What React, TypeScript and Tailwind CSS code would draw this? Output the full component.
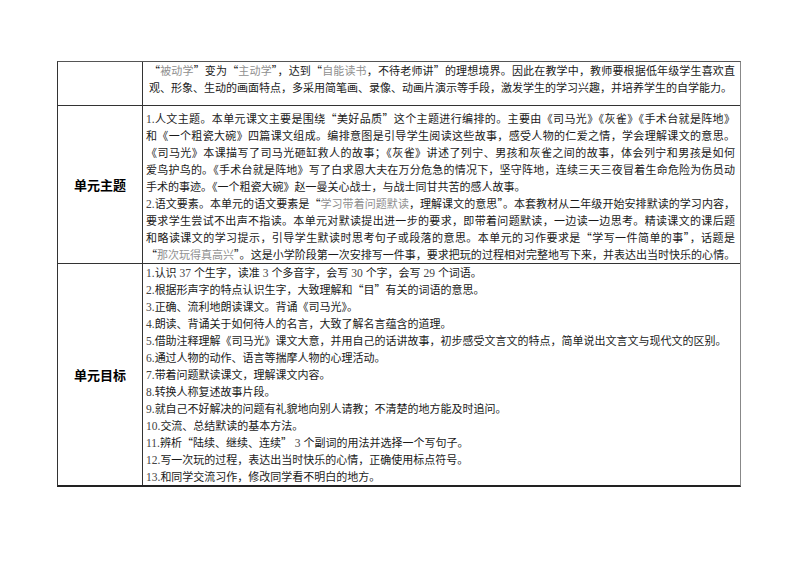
import type { ReactNode } from "react";

const FULL = "whitespace-nowrap text-justify [text-align-last:justify]";

function G({ children }: { children: ReactNode }) {
  return <span className="text-[#8f8f8f]">{children}</span>;
}

function N({ children }: { children: ReactNode }) {
  return <span className="font-['Liberation_Serif'] text-[11.5px] leading-none text-[#444]">{children}</span>;
}

function Line({ children, full }: { children: ReactNode; full?: boolean }) {
  return <div className={`h-[17px] ${full ? FULL : "whitespace-nowrap"}`}>{children}</div>;
}

const goals: ReactNode[] = [
  <>认识<N> 37 </N>个生字，读准<N> 3 </N>个多音字，会写<N> 30 </N>个字，会写<N> 29 </N>个词语。</>,
  <>根据形声字的特点认识生字，大致理解和“目”有关的词语的意思。</>,
  <>正确、流利地朗读课文。背诵《司马光》。</>,
  <>朗读、背诵关于如何待人的名言，大致了解名言蕴含的道理。</>,
  <>借助注释理解《司马光》课文大意，并用自己的话讲故事，初步感受文言文的特点，简单说出文言文与现代文的区别。</>,
  <>通过人物的动作、语言等揣摩人物的心理活动。</>,
  <>带着问题默读课文，理解课文内容。</>,
  <>转换人称复述故事片段。</>,
  <>就自己不好解决的问题有礼貌地向别人请教；不清楚的地方能及时追问。</>,
  <>交流、总结默读的基本方法。</>,
  <>辨析“陆续、继续、连续”<N> 3 </N>个副词的用法并选择一个写句子。</>,
  <>写一次玩的过程，表达出当时快乐的心情，正确使用标点符号。</>,
  <>和同学交流习作，修改同学看不明白的地方。</>,
];

export default function App() {
  return (
    <div
      lang="zh-CN"
      className="w-[794px] h-[561px] bg-white pt-[61px] pl-[57px] font-['Noto_Sans_CJK_SC',sans-serif] text-[11px] text-[#1a1a1a]"
    >
      <div className="grid w-[684px] grid-cols-[85px_1fr] border-t border-l border-r border-b-2 border-t-[#555] border-l-[#333] border-r-[#888] border-b-[#222]">
        {/* continuation row */}
        <div className="h-[44px] border-r border-b border-[#333]" />
        <div className="h-[44px] border-b border-[#333] pl-[6px] pr-[5px] leading-[17px]">
          <Line full>
            “<G>被动学</G>”变为“<G>主动学</G>”，达到“<G>自能读书</G>，不待老师讲”的理想境界。因此在教学中，教师要根据低年级学生喜欢直
          </Line>
          <Line>观、形象、生动的画面特点，多采用简笔画、录像、动画片演示等手段，激发学生的学习兴趣，并培养学生的自学能力。</Line>
        </div>

        {/* 单元主题 */}
        <div className="flex h-[158px] items-center justify-center border-r border-b border-[#333] text-[13px] font-bold text-black">
          单元主题
        </div>
        <div className="h-[158px] border-b border-[#333] pt-[4px] pl-[3px] pr-[5px] leading-[17px]">
          <Line full>
            <N>1.</N>人文主题。本单元课文主要是围绕“美好品质”这个主题进行编排的。主要由《司马光》《灰雀》《手术台就是阵地》
          </Line>
          <Line full>和《一个粗瓷大碗》四篇课文组成。编排意图是引导学生阅读这些故事，感受人物的仁爱之情，学会理解课文的意思。</Line>
          <Line full>《司马光》本课描写了司马光砸缸救人的故事；《灰雀》讲述了列宁、男孩和灰雀之间的故事，体会列宁和男孩是如何</Line>
          <Line full>爱鸟护鸟的。《手术台就是阵地》写了白求恩大夫在万分危急的情况下，坚守阵地，连续三天三夜冒着生命危险为伤员动</Line>
          <Line>手术的事迹。《一个粗瓷大碗》赵一曼关心战士，与战士同甘共苦的感人故事。</Line>
          <Line full>
            <N>2.</N>语文要素。本单元的语文要素是“<G>学习带着问题默读</G>，理解课文的意思”。本套教材从二年级开始安排默读的学习内容，
          </Line>
          <Line full>要求学生尝试不出声不指读。本单元对默读提出进一步的要求，即带着问题默读，一边读一边思考。精读课文的课后题</Line>
          <Line full>和略读课文的学习提示，引导学生默读时思考句子或段落的意思。本单元的习作要求是“学写一件简单的事”，话题是</Line>
          <div className={`h-[17px] ${FULL} tracking-[-0.15px]`}>
            “<G>那次玩得真高兴</G>”。这是小学阶段第一次安排写一件事，要求把玩的过程相对完整地写下来，并表达出当时快乐的心情。
          </div>
        </div>

        {/* 单元目标 */}
        <div className="flex h-[221px] items-center justify-center border-r border-[#333] text-[13px] font-bold text-black">
          单元目标
        </div>
        <div className="h-[221px] pl-[3px] pr-[5px] leading-[17px]">
          {goals.map((g, i) => (
            <Line key={i}>
              <N>{i + 1}.</N>
              {g}
            </Line>
          ))}
        </div>
      </div>
    </div>
  );
}
